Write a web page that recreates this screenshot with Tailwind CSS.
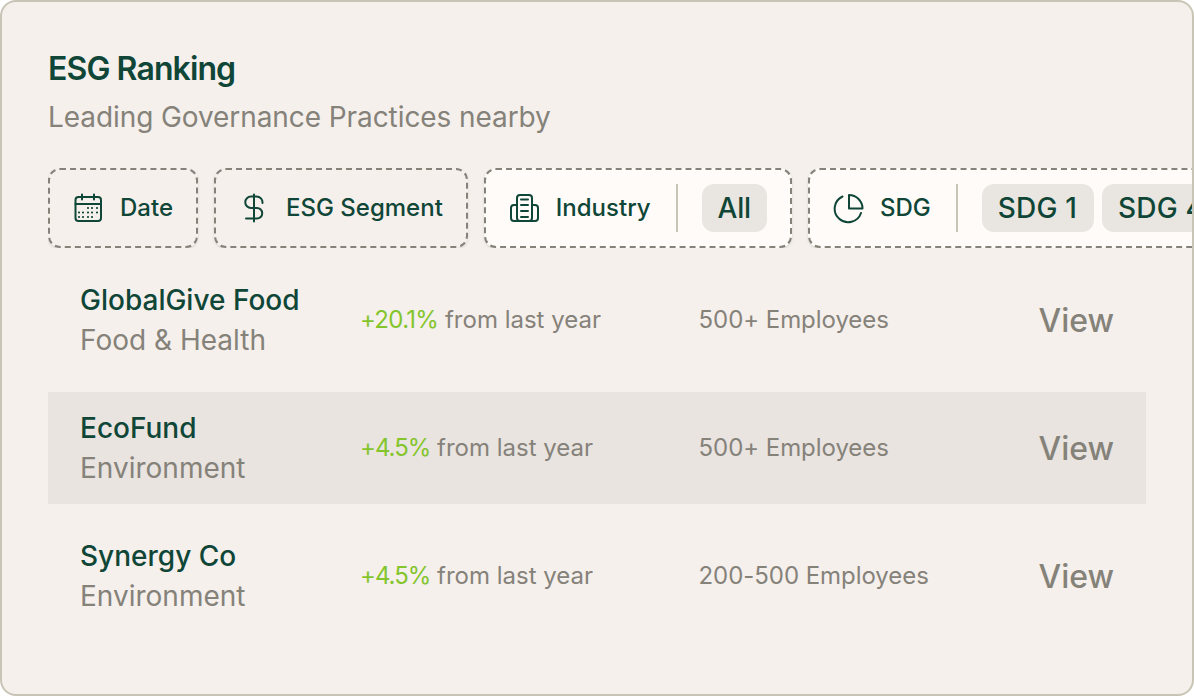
<!DOCTYPE html>
<html lang="en">
<head>
  <meta charset="UTF-8">
  <meta name="viewport" content="width=device-width, initial-scale=1.0">
  <script src="https://cdn.jsdelivr.net/npm/@tailwindcss/browser@4"></script>
  <title>esg-ranking</title>
</head>
<body class="bg-white font-['Inter',sans-serif] antialiased">
  <div class="w-[1194px] h-[696px] overflow-hidden bg-[#f5f0ec] border-2 border-[#c9c5b6] rounded-2xl pt-[45px] pl-[46px] pr-[46px]">
    <h2 class="text-[32px] leading-[44px] font-semibold tracking-[-0.9px] text-[#0f4637]">ESG Ranking</h2>
    <p class="mt-[2px] text-[28px] leading-[48px] tracking-[-0.08px] text-[#85827a]">Leading Governance Practices nearby</p>

    <!-- filters -->
    <div class="mt-[27px] flex gap-4 w-[1146px] overflow-hidden text-[#0f4637]">
      <div class="h-20 shrink-0 flex items-center gap-4 pl-[22px] pr-[23px] border-2 border-dashed border-[#85827a] rounded-xl shadow-sm">
        <svg class="w-8 h-8" viewBox="0 0 32 32" fill="none" stroke="currentColor" stroke-width="2" stroke-linecap="round">
          <rect x="3.500" y="5" width="25.500" height="24" rx="3"/>
          <path d="M3.500 12h25.500M10 2.500v5M22 2.500v5"/>
          <path stroke-width="2.200" d="M16 16h.01M20 16h.01M25 16h.01M7 20.500h.01M11 20.500h.01M16 20.500h.01M20 20.500h.01M25 20.500h.01M7 25h.01M11 25h.01M16 25h.01M20 25h.01"/>
        </svg>
        <span class="text-2xl font-medium">Date</span>
      </div>
      <div class="h-20 shrink-0 flex items-center gap-4 pl-[22px] pr-[23px] border-2 border-dashed border-[#85827a] rounded-xl shadow-sm">
        <svg class="w-8 h-8" viewBox="0 0 32 32" fill="none" stroke="currentColor" stroke-width="2" stroke-linecap="round">
          <path d="M16 2.500v27M24.500 11a6 6 0 0 0-6-6.500h-5.500a5.500 5.500 0 0 0 0 11.500h6a5 5 0 0 1 0 10.500H8"/>
        </svg>
        <span class="text-2xl font-medium">ESG Segment</span>
      </div>
      <div class="h-20 shrink-0 flex items-center pl-[22px] pr-[23px] bg-[#fefbf8] border-2 border-dashed border-[#85827a] rounded-xl shadow-sm">
        <svg class="w-8 h-8" viewBox="0 0 32 32" fill="none" stroke="currentColor" stroke-width="2" stroke-linecap="round" stroke-linejoin="round">
          <rect x="9" y="3" width="15" height="26" rx="3"/>
          <path d="M9 13H6a3 3 0 0 0-3 3v10a3 3 0 0 0 3 3h21a3 3 0 0 0 3-3V16a3 3 0 0 0-3-3h-3M13 7.500h7M13 13h7M13 19h7M13 25h7"/>
        </svg>
        <span class="ml-4 text-2xl font-medium">Industry</span>
        <span class="ml-[25px] w-[2px] h-12 bg-[#c9c5b6]"></span>
        <span class="ml-6 h-12 px-4 flex items-center rounded-xl bg-[#e9e5e0] text-[28px] font-medium tracking-[-0.2px]">All</span>
      </div>
      <div class="h-20 shrink-0 flex items-center pl-[22px] pr-[22px] bg-[#fefbf8] border-2 border-dashed border-[#85827a] rounded-xl shadow-sm">
        <svg class="w-8 h-8" viewBox="0 0 32 32" fill="none" stroke="currentColor" stroke-width="2" stroke-linecap="round" stroke-linejoin="round">
          <path d="M10.500 4.500A13.500 13.500 0 1 0 29 21"/>
          <path d="M17 3a13.500 13.500 0 0 1 13.500 13.500H17z"/>
        </svg>
        <span class="ml-4 text-2xl font-medium">SDG</span>
        <span class="ml-[25px] w-[2px] h-12 bg-[#c9c5b6]"></span>
        <span class="ml-6 h-12 pl-4 pr-[17px] flex items-center rounded-xl bg-[#e9e5e0] text-[28px] font-medium tracking-[0.2px]">SDG 1</span>
        <span class="ml-2 h-12 px-4 flex items-center rounded-xl bg-[#e9e5e0] text-[28px] font-medium tracking-[0.2px]">SDG 4</span>
      </div>
    </div>

    <!-- rows -->
    <div class="mt-4 flex flex-col gap-4 w-[1098px]">
      <div class="h-28 px-8 flex items-center">
        <div class="w-[280px]">
          <div class="text-[28px] leading-10 font-medium text-[#0f4637]">GlobalGive Food</div>
          <div class="text-[28px] leading-10 text-[#85827a]">Food &amp; Health</div>
        </div>
        <div class="w-[338.500px] text-2xl text-[#85827a]"><span class="text-[#84c52c] tracking-[-0.7px]">+20.1%</span> from last year</div>
        <div class="text-2xl tracking-[-0.05px] text-[#85827a]">500+ Employees</div>
        <div class="ml-auto pt-[2px] text-[32px] font-medium text-[#85827a]">View</div>
      </div>
      <div class="h-28 px-8 flex items-center bg-[#e9e4e0]">
        <div class="w-[280px]">
          <div class="text-[28px] leading-10 font-medium text-[#0f4637]">EcoFund</div>
          <div class="text-[28px] leading-10 text-[#85827a]">Environment</div>
        </div>
        <div class="w-[338.500px] text-2xl text-[#85827a]"><span class="text-[#84c52c] tracking-[-1px]">+4.5%</span> from last year</div>
        <div class="text-2xl tracking-[-0.05px] text-[#85827a]">500+ Employees</div>
        <div class="ml-auto pt-[2px] text-[32px] font-medium text-[#85827a]">View</div>
      </div>
      <div class="h-28 px-8 flex items-center">
        <div class="w-[280px]">
          <div class="text-[28px] leading-10 font-medium text-[#0f4637]">Synergy Co</div>
          <div class="text-[28px] leading-10 text-[#85827a]">Environment</div>
        </div>
        <div class="w-[338.500px] text-2xl text-[#85827a]"><span class="text-[#84c52c] tracking-[-1px]">+4.5%</span> from last year</div>
        <div class="text-2xl tracking-[-0.05px] text-[#85827a]">200-500 Employees</div>
        <div class="ml-auto pt-[2px] text-[32px] font-medium text-[#85827a]">View</div>
      </div>
    </div>
  </div>
</body>
</html>
